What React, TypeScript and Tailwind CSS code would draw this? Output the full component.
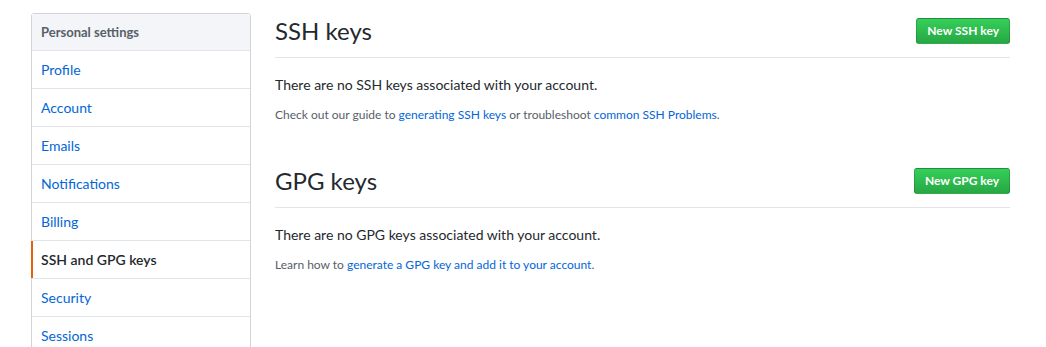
const navItems = [
  'Profile',
  'Account',
  'Emails',
  'Notifications',
  'Billing',
  'SSH and GPG keys',
  'Security',
  'Sessions',
];

const Subhead = ({ title, action, spacious }: { title: string; action: string; spacious?: boolean }) => (
  <div className={`flex items-center border-b border-[#e1e4e8] pb-2 mb-4 ${spacious ? 'mt-[39px]' : ''}`}>
    <h2 className="flex-1 text-[24px] leading-[36px] font-normal text-[#24292e]">{title}</h2>
    <button className="rounded-[3px] border border-[rgba(27,31,35,0.2)] bg-gradient-to-b from-[#34d058] to-[#28a745] px-[10px] py-[2px] text-[12px] font-bold leading-[20px] text-white">
      {action}
    </button>
  </div>
);

export default function App() {
  return (
    <div className="flex items-start gap-6 pl-[31px] pt-[13px] font-['Lato',sans-serif] text-[14px] text-[#24292e] bg-white h-[347px] overflow-hidden">
      <nav className="w-[220px] shrink-0 rounded-t-[3px] border border-[#d1d5da]">
        <div className="border-b border-[#e1e4e8] bg-[#f3f5f8] pl-[9px] py-2 leading-[20px] font-bold text-[#586069] text-[13px]">
          Personal settings
        </div>
        {navItems.map((item) => {
          const active = item === 'SSH and GPG keys';
          return (
            <a
              key={item}
              href="#"
              className={`relative block border-b border-[#e1e4e8] pl-[9px] py-2 leading-[21px] ${
                active ? 'text-[#24292e] font-semibold' : 'text-[#0366d6]'
              }`}
            >
              {active && <span className="absolute -left-px top-0 bottom-0 w-[2px] bg-[#e36209]" />}
              {item}
            </a>
          );
        })}
      </nav>

      <main className="w-[735px]">
        <Subhead title="SSH keys" action="New SSH key" />
        <p className="leading-[21px] mb-[11px]">There are no SSH keys associated with your account.</p>
        <p className="text-[12px] leading-[18px] text-[#586069]">
          Check out our guide to <a href="#" className="text-[#0366d6]">generating SSH keys</a> or troubleshoot{' '}
          <a href="#" className="text-[#0366d6]">common SSH Problems</a>.
        </p>

        <Subhead title="GPG keys" action="New GPG key" spacious />
        <p className="leading-[21px] mb-[11px]">There are no GPG keys associated with your account.</p>
        <p className="text-[12px] leading-[18px] text-[#586069]">
          Learn how to <a href="#" className="text-[#0366d6]">generate a GPG key and add it to your account</a>.
        </p>
      </main>
    </div>
  );
}
